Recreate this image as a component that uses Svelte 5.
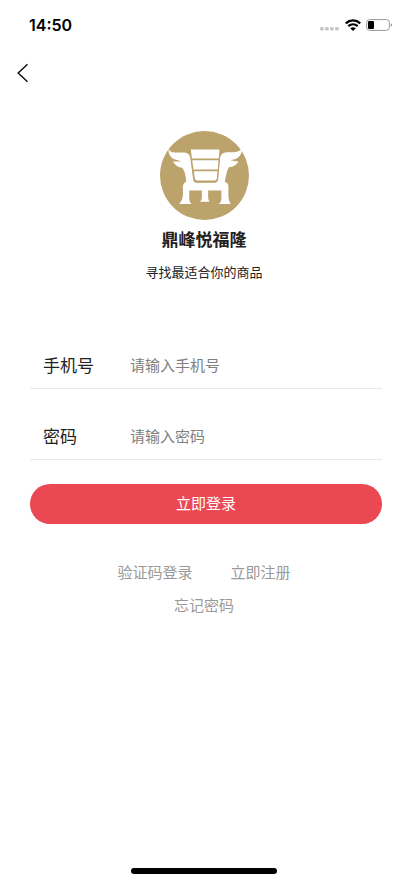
<script lang="ts">
  interface Field {
    id: string;
    label: string;
    type: "tel" | "password";
    placeholder: string;
  }

  const fields: Field[] = [
    { id: "phone", label: "手机号", type: "tel", placeholder: "请输入手机号" },
    { id: "password", label: "密码", type: "password", placeholder: "请输入密码" },
  ];

  const links = ["验证码登录", "立即注册", "忘记密码"];

  let values: Record<string, string> = { phone: "", password: "" };

  function handleSubmit(event: Event) {
    event.preventDefault();
  }
</script>

<div class="page">
  <div class="status-bar">
    <span class="time">14:50</span>
    <div class="status-icons">
      <svg width="20" height="14" viewBox="0 0 20 14" fill="#c8c8c8" aria-hidden="true">
        <rect x="0" y="9" width="3.8" height="3.6" rx="1.4" />
        <rect x="5" y="9" width="3.8" height="3.6" rx="1.4" />
        <rect x="10" y="9" width="3.8" height="3.6" rx="1.4" />
        <rect x="15" y="9" width="3.8" height="3.6" rx="1.4" />
      </svg>
      <svg width="16" height="12" viewBox="0 0 16 12" aria-hidden="true">
        <path d="M.8 4.300C4.900.5 11.100.5 15.200 4.300M3.300 7.200c2.800-2.500 6.600-2.500 9.400 0" fill="none" stroke="#000" stroke-width="2.300" />
        <path d="M5.200 9.200c1.700-1.400 3.900-1.400 5.600 0L8 12z" fill="#000" />
      </svg>
      <svg width="27" height="12" viewBox="0 0 27 12" aria-hidden="true">
        <rect x=".6" y=".6" width="22.800" height="10.800" rx="3" fill="#fff" stroke="#999" />
        <rect x="2" y="2" width="6" height="8" rx="1.200" fill="#000" />
        <path d="M24.800 4.200v3.600c1.600-.6 1.600-3 0-3.600z" fill="#888" />
      </svg>
    </div>
  </div>

  <header>
    <button class="back" type="button" aria-label="返回">
      <svg width="12" height="20" viewBox="0 0 12 20" fill="none" stroke="#111" stroke-width="1.5">
        <path d="M10.500 1.200 1.200 10l9.300 8.800" />
      </svg>
    </button>
  </header>

  <main>
    <section class="brand">
      <svg class="logo" viewBox="28 31 268 268" aria-hidden="true">
        <circle cx="162" cy="165" r="134" fill="#bca36c" />
        <path
          fill="#fff"
          d="M54 84C56 92 62 96 72 96H98Q116 96 119 111L128 178Q129 187 137 187H192Q201 187 202 178L209 111Q212 96 229 95H252Q268 94 274 84C276 97 270 108 258 114C253 117 248 117 240 119C248 121 256 122 264 123C258 135 246 140 236 140C229 149 227 164 223 184Q234 187 234 198V229Q235 242 241 251H205Q213 244 213 234V210H173V232Q173 240 178 244H148Q154 239 154 231V210H116V234Q116 244 123 251H86Q96 240 97 226V198Q98 187 107 184C106 165 102 151 95 142C84 141 73 134 67 123C74 122 82 124 92 122C85 119 78 119 71 116C59 111 52 99 54 84z"
        />
        <path d="M117 83H211L203 178Q202 185 194 185H137Q130 185 129 177z" fill="#bca36c" />
        <g fill="#fff">
          <path d="M121 87H207L205 114H124z" />
          <path d="M125 119H204L202 147H129z" />
          <path d="M130 152H201L199 174Q198 180 193 180H140Q134 180 133 174z" />
        </g>
      </svg>
      <h1>鼎峰悦福隆</h1>
      <p>寻找最适合你的商品</p>
    </section>

    <form on:submit={handleSubmit}>
      {#each fields as field}
        <div class="field">
          <label for={field.id}>{field.label}</label>
          <input
            id={field.id}
            type={field.type}
            placeholder={field.placeholder}
            value={values[field.id]}
            on:input={(e) => (values[field.id] = e.currentTarget.value)}
          />
        </div>
      {/each}
      <button class="submit" type="submit">立即登录</button>
    </form>

    <nav>
      {#each links as link}
        <a href="#top">{link}</a>
      {/each}
    </nav>
  </main>

  <div class="home-indicator"></div>
</div>

<style>
  :global(body) {
    margin: 0;
    background: #fff;
  }
  .page {
    display: flex;
    flex-direction: column;
    min-height: 100vh;
    box-sizing: border-box;
    padding-bottom: 9px;
    font-family: "Noto Sans CJK SC", sans-serif;
    color: #222;
  }
  .status-bar {
    display: flex;
    align-items: center;
    justify-content: space-between;
    height: 50px;
    padding: 0 15px 0 29px;
  }
  .time {
    font-family: Inter, sans-serif;
    font-size: 16px;
    font-weight: 600;
    color: #000;
  }
  .status-icons {
    display: flex;
    align-items: center;
    gap: 5px;
  }
  header {
    display: flex;
    align-items: center;
    height: 45px;
    padding: 0 9px;
  }
  .back {
    display: flex;
    padding: 8px;
    border: 0;
    background: none;
  }
  .brand {
    display: flex;
    flex-direction: column;
    align-items: center;
    padding-top: 36px;
  }
  .logo {
    width: 89px;
    height: 89px;
  }
  h1 {
    margin: 7px 0 0;
    font-size: 17px;
    line-height: 24px;
    font-weight: 700;
  }
  p {
    margin: 11px 0 0;
    font-size: 13px;
    line-height: 20px;
  }
  form {
    padding: 60px 26px 0 30px;
  }
  .field {
    display: flex;
    align-items: center;
    height: 46px;
    margin-bottom: 24px;
    padding-left: 13px;
    border-bottom: 1px solid #e8e8e8;
  }
  label {
    width: 87px;
    font-size: 17px;
    line-height: 24px;
  }
  input {
    flex: 1;
    min-width: 0;
    padding: 0;
    border: 0;
    outline: 0;
    background: none;
    font-family: inherit;
    font-size: 15px;
    line-height: 24px;
  }
  input::placeholder {
    color: #808080;
  }
  .submit {
    display: block;
    width: 100%;
    height: 40px;
    padding: 0 0 2px;
    border: 0;
    border-radius: 20px;
    background: #ea4954;
    color: #fff;
    font-family: inherit;
    font-size: 15px;
    line-height: 24px;
  }
  nav {
    display: flex;
    flex-wrap: wrap;
    justify-content: center;
    gap: 9px 38px;
    padding: 36px 80px 0;
  }
  a {
    color: #999;
    font-size: 15px;
    line-height: 24px;
    text-decoration: none;
  }
  .home-indicator {
    width: 146px;
    height: 6px;
    margin: auto auto 0;
    border-radius: 3px;
    background: #000;
  }
</style>
